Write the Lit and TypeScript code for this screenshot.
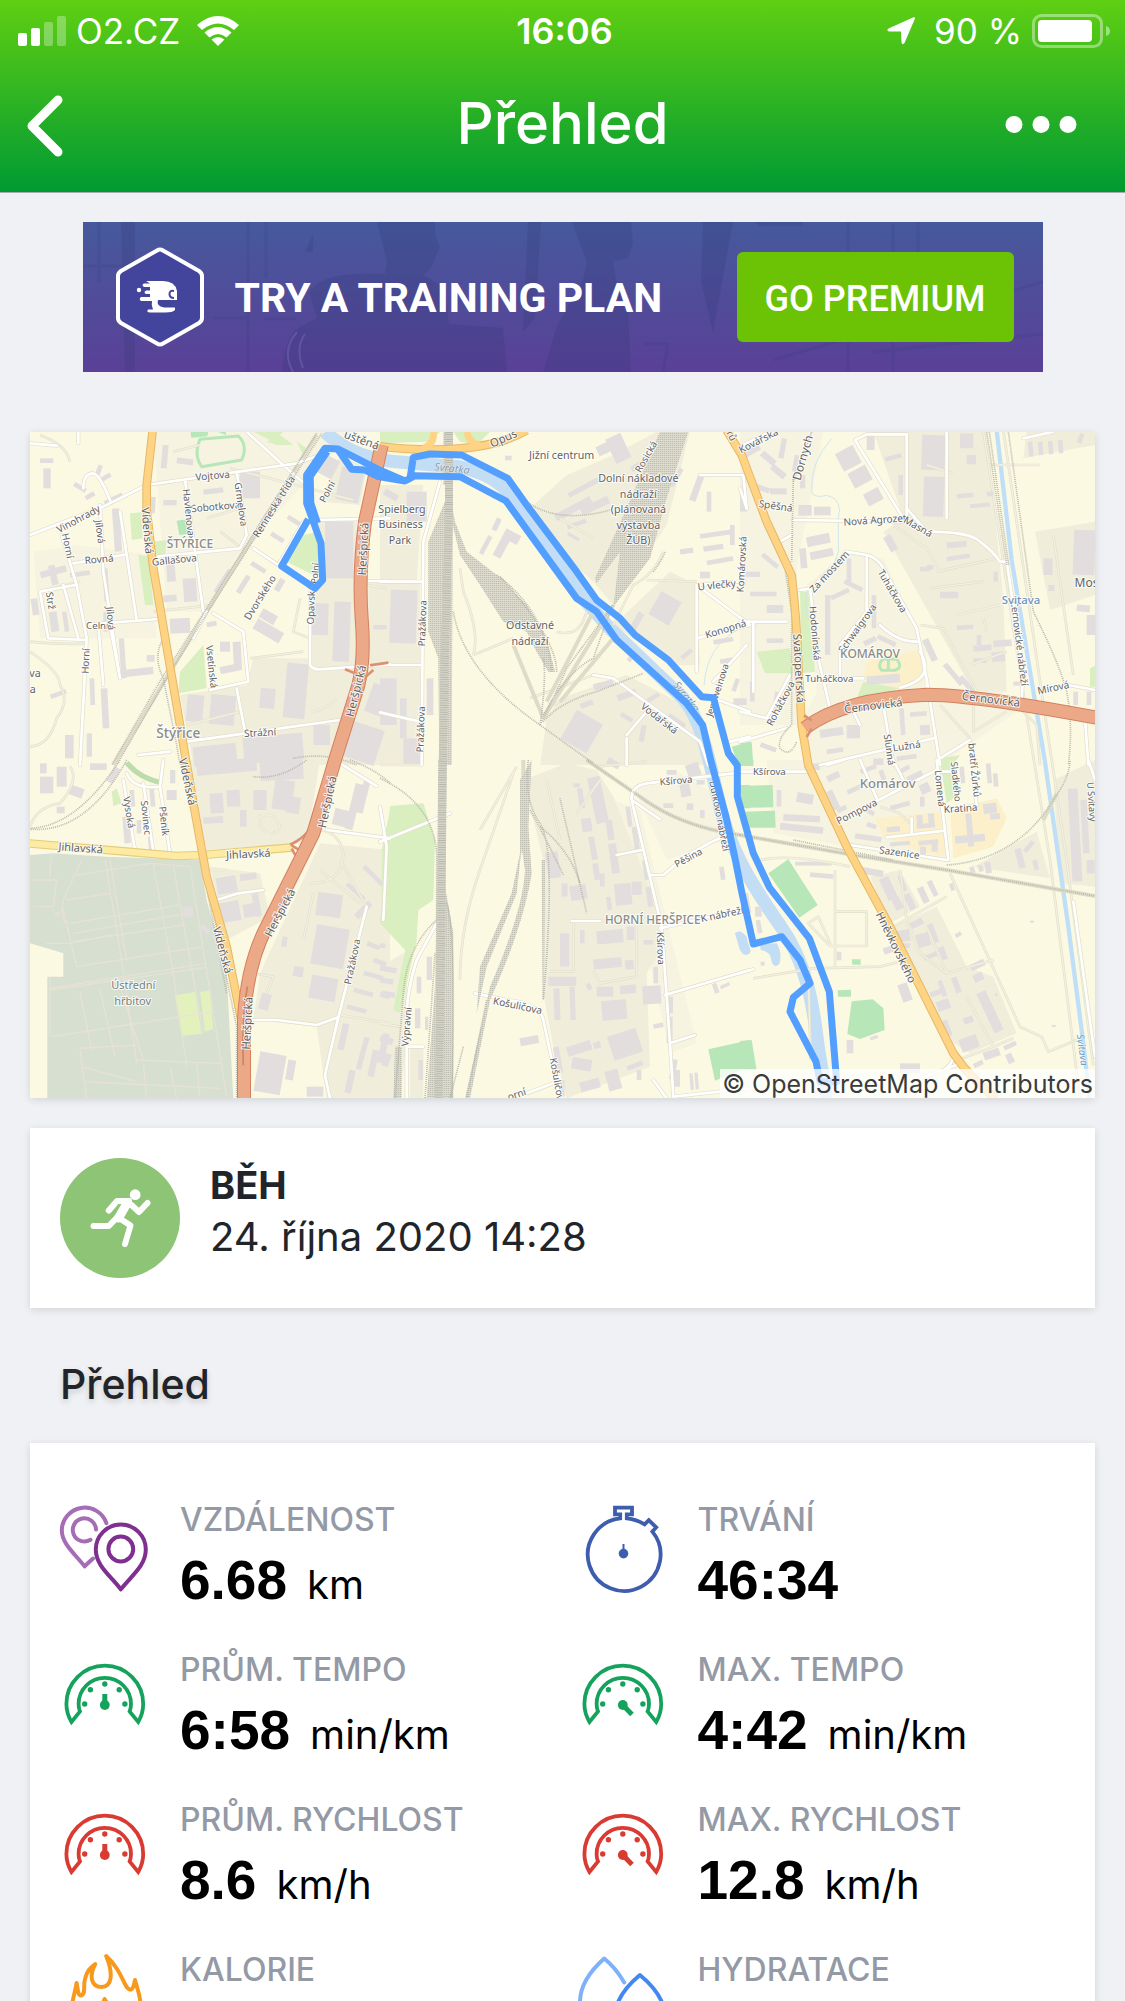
import { LitElement, html, svg, css } from "lit";
import { customElement, property } from "lit/decorators.js";

/* ---------- Map data: six tiles, each with its own local coordinates ---------- */

type Tile = "a" | "b" | "c" | "d" | "e" | "f";
type Layer = Partial<Record<Tile, string>>;

const ORIGIN: Record<Tile, [number, number]> = {
  a: [-30, -21], b: [1050, -21], c: [2130, -21],
  d: [-30, 984], e: [1050, 984], f: [2130, 984],
};

const residential: Layer = {
  a: "M400 20H1000L700 340 560 560 440 560ZM40 380L170 360 400 390 410 640H60Z",
  c: "M0 20H250L170 430V900H0ZM200 480L320 380 430 400 560 680 550 790 780 790 830 860 600 1020H200L180 900 230 800Z",
  e: "M700 120L780 150 860 480 950 850 870 880ZM760 80L900 40 1000 100 1040 240 860 300Z",
  f: "M80 0H600L620 300 330 260 100 220Z",
};

const industrial: Layer = {
  a: "M700 700L1110 700V1020H520L480 810 680 780ZM880 280H1010V730H870L880 470ZM1045 470H1110V720H1045ZM960 90L1040 130 1020 240 900 230Z",
  b: "M0 180H130L110 470H120V1020H0ZM450 250L560 150 700 90 830 20H930L860 300 700 540 640 470 560 400ZM700 600L870 440 950 480 960 720 880 720ZM540 820L740 750 930 850 975 1020H480L500 880Z",
  c: "M400 20H740L790 520 800 800 700 800 430 320 490 280ZM885 320L1065 290V510L930 555ZM860 20H1065V60L850 100Z",
  d: "M500 0H900L860 250 560 270ZM570 320L720 340 750 470 620 540ZM900 250L1110 270V1015H920L890 800 700 780 720 640Z",
  e: "M430 60L560 10 650 30 700 110 840 460 850 560 800 640 810 920 560 1015 520 860 490 700 490 300ZM0 620L70 580 90 760 60 1015H0ZM90 860H130V1015H90Z",
  f: "M460 500L590 440 680 620 760 650 830 820 690 880 640 850 560 700ZM700 320L890 215 930 355ZM940 60L1065 0V380L960 370ZM390 350L480 330 540 440 450 490Z",
};

const parks: Layer = {
  a: "M330 265L365 262 368 340 335 345ZM355 390L385 392 400 540 375 540ZM400 350L440 345 435 400 410 400ZM850 330L900 320 900 440 880 450 800 410ZM480 740L550 660 560 790 475 805ZM740 50L780 30 820 60 770 60ZM830 50L860 70 850 90ZM700 20H790L760 50Z",
  b: "M0 20H180L150 50 0 55ZM220 20H330L290 60 240 50Z",
  c: "M50 680L150 670 160 745 75 745ZM180 500L205 500 225 740 185 745ZM350 820L370 770 480 790 440 800ZM1050 730L1065 722V785H1050ZM600 1000L660 990 640 1020H600Z",
  d: "M275 95L290 85 305 130 280 138ZM1085 270L1110 150V510L1085 470Z",
  e: "M30 138L130 130 165 240 160 420 115 450 110 540 60 760 40 750 75 570 0 490Z",
  f: "M600 0H640L660 100 620 130Z",
};

const pitches: Layer = {
  a: "M470 287L500 283 504 328 478 330ZM512 20H565L562 34 514 38ZM592 20H618V30Z",
  b: "M1055 965L1110 950V1020H1075Z",
  c: "M0 955L35 950 40 1020H0Z",
  e: "M985 868L1110 840V920L1005 962ZM1080 75H1110V145H1085ZM1090 0H1110V15Z",
  f: "M0 78L98 75 100 142 18 143ZM15 155L105 152 107 203 25 203ZM85 340L145 298 233 435 178 473ZM335 598H362V614H337ZM293 691L333 689V710H294ZM335 724L398 718 430 745 434 810 360 837 322 822ZM0 843L35 840 50 930H0ZM0 0H40V18H0Z",
};

const school: Layer = {
  c: "M380 710L545 672 550 770 480 790 370 760Z",
  f: "M405 175L600 155 620 290 540 275 430 230ZM630 150L770 115 800 175 760 260 640 295Z",
};

const cemetery: Layer = {
  d: "M30 285L100 280 260 290 540 300 560 420 620 640 640 1015H82V650H130V580L30 550Z",
};

const water: Layer = {
  e: "M1065 520Q1080 505 1100 530L1110 580Q1090 595 1078 565Z",
  f: "M0 520Q25 535 32 575Q15 590 0 565ZM60 552L110 550Q128 580 118 612Q100 628 94 600Q92 575 62 570Z",
};

const streets: Layer = {
  a: "M30 330L250 245 380 180 830 115 900 90M190 190Q190 145 220 145 240 150 270 225M240 240L250 440 300 760M125 330L170 480 200 640 180 1020M60 500L165 480M60 500Q70 560 85 640L200 645M160 415L320 388M300 260L350 585M210 598L415 582M410 395L660 370M495 165L550 560M650 140L680 330 660 370M520 640L560 560M580 565L670 620 685 770 570 795M650 790L675 920M500 950L960 885M680 20L800 130 870 190M700 370L775 420M870 470V720Q880 735 900 733L1110 718M1040 468H1110M880 285L1110 280M775 420L850 290M355 990L450 980M270 600L300 760M235 600L250 780M130 480L175 640M175 20V55M30 55L110 62",
  b: "M130 350L125 1020M180 170L130 350M0 470H125M0 720H125M0 862L120 890M640 750L700 760 960 950 985 1020M950 740V480L1110 600M950 640L1110 600M960 150L1090 150 1100 250M1090 340V480M740 930L800 860M1000 820L1110 860M1050 950L1110 935M950 480L1080 470M740 940V1020M1100 660L1000 770",
  c: "M10 60L90 20M345 45L380 28H500V250L560 320Q690 320 720 350 760 380 780 410L800 410 850 740 845 820M345 45L490 280M160 285L500 290 500 250M620 20V280M180 495L215 490 320 380 380 390V560L300 660M380 390Q420 400 440 450L530 610 565 790M420 600Q470 650 530 650M205 760H370M300 660V750M540 680Q590 760 480 788M0 590H140M40 590V800M0 860L80 880 150 750M0 950L140 910M210 490L235 700 270 850M340 860L360 900M430 840L460 1020M570 830L600 1020M240 1020L580 940M600 1000L690 945M560 800V760M850 40L940 20M985 780L1065 795M1035 880L1045 1020M120 350L155 330M0 190L20 250",
  d: "M320 40Q340 90 420 80L430 0M310 60L345 270M370 70L400 275M420 80L450 280M960 10L1070 78M590 420L655 400 730 390M690 780H770L890 795 955 772M1040 440L955 772 915 945 930 1015M920 210L1110 235",
  e: "M0 245L210 160M1060 40L800 70Q750 80 755 120L845 500 870 850 880 1010M755 120L840 178M810 345H850Q930 270 1040 225M710 285L785 270M575 483H660M840 505L1080 450M855 705L1110 630M870 850L945 825M285 700L380 720Q480 730 490 780L540 1015M80 860H130M440 1000L520 970M820 960L860 1015M880 1010L1110 985M80 1015V860Q70 720 110 600L170 490M0 140L20 260 10 480",
  f: "M0 35H200M260 15L310 0M300 180L590 30M360 0L410 115M590 0L625 300M330 255L620 300M440 232L615 212M515 175V220M460 0L490 60M0 640L40 628M1000 425L1065 890M1045 0L1065 60M600 35H640M620 150L710 135 700 60M540 955L650 915M640 880Q640 920 600 935",
};

const lanes: Layer = {
  a: "M30 650Q130 660 200 655M30 680Q120 740 120 780 150 830 110 880 90 960 30 965M400 560L580 540M460 80L540 60M60 500L180 470M690 700L850 680M870 640L820 620 840 520M560 280L660 250M600 320L680 380M1040 480L1100 490M880 860Q920 850 950 820M630 130L1000 225M500 900L660 860M150 110Q140 60 60 30",
  b: "M450 820L640 750M240 430L250 500Q300 620 280 690M280 690L400 640M540 280L640 340M850 380Q820 450 760 480L700 600M800 465L950 470M530 620Q600 640 620 560M520 840L560 820",
  c: "M460 300L560 370 600 440M590 440L770 400M570 490L730 470M650 570L780 540M540 600L610 610 710 800M690 720L800 680M740 120H900M600 840L690 940M700 830V920L800 860M940 330L1000 750M740 620L730 580M560 120L640 145M840 850L890 900 900 1020",
  d: "M960 300L1040 440M900 330L1020 430M880 400L850 540M870 370Q970 370 970 280 960 220 900 210M720 170Q760 150 780 200 760 240 720 200ZM700 640L760 650 740 700M960 765L1110 790M560 330H620M30 200Q50 140 120 130 180 60 150 20",
  e: "M640 630L660 670 770 650V500M510 635H580V490M0 790L60 800M590 160L660 60M0 15H120M500 60L540 240M300 210L410 20M240 660Q240 500 300 330L400 40M650 20L800 5",
  f: "M60 300Q150 280 330 320M285 330V620M285 455H380V558H270L205 490 235 470 275 560M40 655L220 625 420 620 500 600M460 500L620 410M630 340L840 800 905 830 925 875 1010 840M680 710L760 860 640 905M500 480L540 580 620 640 760 600M480 330L500 480M420 140L480 160 510 190M760 860L820 835M205 640L212 900M560 500L620 640",
};

const rails: Layer = {
  a: "M905 25L570 550 440 760 290 1020M890 25L560 550 425 760 275 1020M425 650Q400 700 430 760L470 960 480 1020M820 1000Q920 980 1010 1020",
  b: "M383 160Q440 270 580 272 640 270 690 255M220 560Q250 740 480 900L640 1015M480 900Q500 760 490 700M480 900Q540 780 560 730L700 540M490 870Q560 740 640 700L690 560M490 890Q540 830 650 800L790 745M530 740Q530 640 360 455M350 450Q500 560 515 740M820 440Q850 400 855 380",
  c: "M160 150L155 410M135 430L155 560V900Q110 940 120 970 150 1000 170 950M740 20L800 420M748 20L806 420M805 20L880 560Q960 720 980 800 1000 900 985 1020M215 20L160 170",
  d: "M300 0Q170 200 30 205M320 0Q200 220 30 208M480 0L520 140 600 560 650 800V1015M490 0L550 330 620 700M700 50Q780 60 860 0M990 0Q1070 30 1110 70",
  e: "M0 55Q160 130 170 280V480Q80 560 70 700L45 1015M445 0Q430 120 480 190T490 720M450 150Q500 240 550 345M540 115L620 460M480 200Q570 270 600 370M620 0L780 110Q900 200 1080 225M250 860L210 1015M200 430Q230 520 215 1015M165 580L135 1015M320 720L260 1015",
  f: "M0 225L340 285 620 330 1065 408M620 315Q830 300 940 120 990 50 990 0M160 240L460 300",
};

const yards: Layer = {
  b: "M205 180L225 290 260 380 350 450 440 540 500 640 525 740 505 740 470 680 440 620 370 590 300 480 240 390 218 300 215 1020H178L175 700 145 620V350L195 230ZM840 20H925L860 220 810 400 700 545 720 380 650 475 645 460 740 250ZM190 20H218V180H190Z",
  e: "M175 0H200L195 380 220 520V1015H140L165 680 170 400ZM420 60L455 0 445 200 455 340Q430 500 330 720L270 1015H255L330 680Q430 450 435 330L425 260 410 400 320 620 290 760 300 620 395 400 420 280ZM485 300H495L492 720H488ZM45 860H65V1015H40Z",
};

const embankments: Layer = {
  b: "M400 660L490 880M700 540L490 880M640 560L500 830M700 640L540 830",
  e: "M620 0L780 110Q900 200 1080 225M430 0V280",
  f: "M0 225L340 285 620 330 1065 408M910 180L950 100",
  a: "M890 30L560 560 280 1020",
};

const graves: Layer = {
  d: "M170 345L390 310 510 320M255 300L305 600 350 910M270 300L320 600M140 420L270 400M400 315L460 640 500 920M460 320L550 820M510 320L590 820 620 1015M150 490L480 435M160 520L500 460M160 545L490 495M40 360L110 360 100 440 40 440M80 550H150L270 525M170 620L550 560M90 685L560 610M90 690L560 622M95 830L580 755M180 865L350 855M185 920L350 965M190 965L600 985M350 900L600 910M180 695L215 870M240 690L285 890M300 680L370 900M130 450L170 620M185 300L130 420Q120 480 140 490M90 650V830M180 870L200 1015M370 910L380 1015M450 920L470 1015M530 910L540 1015M95 280L90 350",
};

/* Building footprints: x y width height rotation */
const buildings: Layer = {
  a: "660 140 60 80 0;900 95 50 60 28;955 130 70 100 12;470 100 50 18 8;425 60 18 70 5;550 190 60 16 -6;380 215 26 50 4;430 225 40 16 0;60 430 80 20 -15;90 420 20 60 -12;250 430 16 100 -4;280 250 22 130 -4;300 640 16 120 -4;245 790 20 120 -3;210 760 14 80 -2;90 800 50 14 -20;135 930 26 70 0;200 925 16 70 0;500 810 50 80 5;570 810 75 90 5;720 790 45 60 5;795 715 65 165 5;915 290 85 170 0;875 535 50 95 2;940 530 50 180 2;700 600 90 35 30;720 560 50 30 30;640 470 60 16 -58;690 420 50 14 32;750 330 44 14 32;800 280 44 14 32;640 650 24 85 -3;600 650 30 30 0;600 720 60 22 -12;570 460 80 18 -57;450 580 60 45 -3;380 690 24 20 0;310 730 90 22 -6;60 100 40 14 0;70 130 22 60 0;160 180 40 14 30;240 150 34 14 -30;195 205 30 14 -30;230 120 14 30 20;250 215 60 12 -26;520 960 130 60 -6;670 930 180 80 -5;880 900 50 60 0;1060 600 40 14 0;1045 780 60 90 20;980 900 100 110 18;35 520 20 50 -8;90 560 24 60 -8;130 560 14 60 -8;440 415 26 55 -4;490 460 40 70 -4;150 440 60 14 -8;560 590 30 14 -10;430 510 40 20 -5;770 460 18 40 30;250 560 14 60 0",
  b: "30 495 80 160 2;10 200 45 20 30;80 200 60 90 0;0 760 50 140 0;60 820 20 120 0;140 760 20 110 0;70 940 60 80 0;690 30 50 80 -25;650 55 50 30 -25;375 92 20 14 0;330 290 40 16 -65;355 320 26 80 28;310 330 14 60 28;370 320 50 30 28;520 240 120 22 -28;560 180 100 16 -28;600 230 90 24 -25;750 110 60 18 -30;560 290 60 14 -20;860 150 60 14 -60;980 200 14 60 0;960 320 100 14 -8;970 360 60 16 -8;980 400 80 14 -10;960 440 30 20 0;820 510 70 80 30;760 560 20 60 30;700 620 16 40 -40;560 870 90 100 30;640 770 60 20 -15;710 800 60 20 -20;600 830 40 16 -20;800 810 40 14 -30;860 880 60 16 35;780 900 16 50 10;720 870 40 14 30;900 680 40 14 -40;1000 640 60 14 -10;1020 700 40 14 -10;1060 760 14 40 20;1080 200 20 60 0;1050 300 14 60 0;900 370 40 16 -8;670 560 16 40 20;560 330 40 10 30;740 690 30 14 -45;940 150 20 80 20;1060 820 40 20 0",
  c: "295 70 60 60 -28;330 130 60 50 -28;375 195 50 40 -28;545 30 70 105 2;550 155 62 120 2;380 30 24 45 0;435 90 50 14 -15;475 150 14 60 0;660 25 40 45 0;680 90 28 28 0;650 205 50 14 -6;690 235 60 12 -5;865 50 14 45 -5;895 50 14 40 -5;925 48 14 40 -5;955 45 14 40 -5;1015 25 14 30 20;175 240 40 32 0;222 245 50 26 0;200 330 70 30 -12;210 375 70 24 -12;180 370 20 60 -5;1000 315 65 135 2;910 400 28 50 0;925 480 18 18 0;1040 570 25 60 0;1010 540 40 20 5;0 60 60 30 -30;60 90 50 20 40;90 130 50 20 40;30 180 60 16 20;120 40 16 60 10;160 90 14 50 10;90 190 50 18 0;180 150 16 40 0;440 330 24 50 -30;320 400 14 80 0;255 510 16 180 0;270 500 60 14 -25;310 475 60 14 25;395 510 14 100 0;370 640 40 16 -25;410 640 60 14 25;560 640 20 70 -25;600 500 55 20 0;560 420 20 14 0;620 350 60 18 -5;620 390 70 14 -8;540 425 30 14 0;650 600 50 14 -4;710 630 14 30 0;760 645 55 20 -4;700 660 55 18 -4;755 680 40 30 -4;700 700 40 14 0;380 750 100 26 -5;600 740 80 16 50;650 770 60 16 50;0 440 60 16 0;30 500 80 14 0;60 400 60 14 40;80 540 50 24 0;80 640 50 14 0;30 770 14 60 0;100 800 14 60 10;60 960 50 14 20;240 910 70 24 -8;320 900 40 40 0;260 970 50 14 -8;480 850 14 80 -4;510 860 50 14 -4;540 900 30 30 -4;470 990 60 14 -8;400 1000 30 20 0;740 200 20 14 0;1000 800 14 40 0;1040 800 14 40 0;760 440 14 30 0;820 770 20 12 0",
  d: "60 50 40 50 0;110 20 30 60 0;150 80 40 30 20;60 10 20 30 0;110 140 24 20 0;270 20 20 50 30;210 10 50 20 0;330 90 14 50 -5;390 80 14 60 -5;310 170 20 80 -5;385 230 14 40 -5;440 90 30 30 0;350 180 14 40 0;450 30 16 40 0;530 0 180 40 -5;720 0 130 60 -3;570 100 40 60 -4;620 90 40 50 -4;660 150 20 50 0;550 170 60 20 -4;700 90 40 60 0;760 60 60 90 8;800 110 40 50 8;590 350 60 50 -10;660 340 50 20 -8;600 425 60 60 -10;670 430 50 40 -10;700 400 20 70 -10;990 70 24 140 14;940 150 60 50 14;1020 60 20 100 14;890 400 75 70 8;880 500 100 120 10;870 650 80 70 10;1000 360 14 70 -48;1020 340 80 14 45;785 530 16 30 10;820 620 30 30 10;1000 440 60 20 -45;1040 550 40 14 20;1060 600 40 14 20;1030 640 60 14 15;1000 690 60 14 15;980 740 60 14 15;1080 700 30 14 15;1020 830 16 100 15;960 790 20 80 12;1050 870 20 80 12;980 930 20 70 12;1080 820 20 90 12;710 880 80 120 10;800 900 24 60 10;860 980 50 30 0;720 700 30 50 15;490 440 30 30 0;105 455 14 14 0;540 500 30 14 40",
  e: "635 50 38 140 -12;595 85 16 60 -8;605 175 30 40 -8;630 230 18 70 -10;580 70 20 12 0;680 180 20 60 -8;690 250 24 90 -8;500 275 38 80 -8;545 370 18 40 0;570 375 50 45 -10;640 310 18 50 -8;660 340 14 40 0;705 370 50 65 -5;755 365 30 40 0;740 140 14 60 -8;760 200 16 80 -8;790 300 14 60 -8;800 380 16 60 -8;680 410 14 40 -8;540 520 28 100 0;600 510 14 40 0;650 510 80 40 -5;740 500 24 40 0;640 595 85 30 -5;735 600 26 28 -5;505 650 84 28 0;522 685 18 95 -2;570 680 16 100 -2;650 680 50 30 0;720 675 48 26 -5;665 720 75 60 -5;788 677 55 55 -3;820 620 14 50 0;790 540 30 14 0;560 850 75 30 -18;640 845 22 20 -15;690 815 90 75 -18;575 895 60 35 10;740 910 50 14 -20;600 960 60 30 -15;680 930 40 60 -15;525 860 18 80 -10;540 960 14 50 0;420 830 56 24 -10;865 710 14 50 0;860 770 18 80 0;850 920 60 16 -80;880 930 20 50 0;930 940 10 50 -5;945 938 10 50 -5;820 790 30 14 -10;900 60 30 50 -10;920 10 40 40 -20;950 60 24 14 0;920 130 20 20 0;960 150 14 24 0;1020 320 14 40 -8;850 130 30 14 0;860 30 30 14 0;0 620 50 16 10;0 655 40 16 10;5 695 40 16 10;0 550 16 14 0;0 830 40 20 20;10 880 20 40 20;140 590 16 70 0;110 650 14 50 0;105 745 16 60 0;135 770 10 40 0;115 900 14 60 0;190 750 16 50 0;770 930 14 30 0;620 670 14 20 -30;680 0 40 20 30;1000 670 14 30 -20;1020 672 30 10 -25",
  f: "130 165 110 20 3;120 195 130 20 6;170 100 50 30 10;110 90 14 50 0;210 10 30 20 0;270 90 20 60 -25;290 140 30 14 -25;320 80 50 14 -25;260 40 40 20 -25;290 190 20 50 -25;380 150 24 14 30;440 200 40 16 -5;420 30 14 30 -20;380 190 30 14 20;345 225 80 16 8;360 20 50 14 -20;500 40 50 20 -25;540 70 30 30 -25;450 130 60 14 -15;480 20 30 14 -30;530 165 18 40 -4;530 190 55 14 -4;565 160 18 40 -4;535 240 60 14 -6;540 260 18 25 0;575 240 18 35 0;450 245 60 12 -5;645 225 90 22 -5;680 160 18 100 -5;730 130 40 30 -8;750 160 30 18 -5;540 110 14 30 0;660 20 14 50 -5;740 10 14 60 -5;760 40 14 40 -5;690 320 14 20 -20;715 315 14 20 -20;735 305 18 35 -10;830 265 20 60 -15;880 300 14 30 -15;860 240 14 40 40;165 305 110 12 0;210 340 70 14 5;350 325 80 20 10;430 350 30 70 -25;460 410 24 40 -25;480 345 14 50 -20;540 380 20 50 -25;570 360 16 50 -25;500 400 20 50 -25;15 400 14 60 -10;45 440 20 30 0;50 480 14 40 -10;480 670 30 55 -20;430 560 30 20 -20;510 480 40 20 -25;470 510 40 35 -10;530 520 40 40 -15;570 490 18 60 -20;600 560 18 40 -20;550 580 50 14 -20;480 550 30 14 0;600 660 14 50 -20;570 690 40 16 -20;640 650 18 50 -20;590 720 40 30 -20;700 640 30 24 -25;690 605 45 20 -25;735 690 30 130 -25;670 770 30 20 -20;660 830 55 40 -20;610 780 20 50 -20;730 870 50 24 -20;790 850 40 14 -25;800 880 20 30 -25;700 905 30 14 -25;480 910 60 30 0;645 518 20 12 -30;390 828 24 10 -20;320 840 20 40 0;290 575 14 26 0;62 605 12 12 0;765 700 8 8 0;990 85 30 280 -3;1025 120 20 160 -3;1040 300 24 40 0;630 370 12 22 -20;870 482 12 6 0;935 795 12 6 0",
};

/* Labels: text | x | y | size | rotation | variant */
const labels: Layer = {
  a: "Vojtova|578|152|30|-5;Sobotkova|587|245|30|-5;Gallašova|463|405|30|-6;Rovná|237|403|30|-5;Vinohrady|175|282|30|-28;Havlenova|506|262|29|84;Grmelova|663|238|29|82;Jílová|240|320|29|82;Horní|143|362|29|78;Vídeňská|382|317|33|85;Renneská třída|762|245|30|-58;Polní|922|200|29|-62;Dvorského|720|517|30|-58;Opavská|873|540|29|-88;Polní|885|445|27|-85;Heršpická|1030|372|34|-87;Heršpická|1008|798|34|-76;Strž|92|527|29|82;Celní|232|603|29|0;Jílová|272|580|29|85;Horní|197|708|29|-88;Vsetínská|575|725|29|84;ŠTÝŘICE|510|357|36|0|place;Štýřice|475|924|41|0|place;Strážní|720|923|30|-3;va|45|745|32|0;a|38|792|32|0;uštěná|1025|45|34|20",
  b: "Svratka|216|130|32|6|river;Opuš|370|40|34|-24;Jižní centrum|545|90|32|0;Dolní nákladové|775|160|32|0;nádraží|775|207|32|0;(plánovaná|775|253|32|0;výstavba|775|300|32|0;ŽUB)|775|345|32|0;Rosická|798|95|29|-60;Spielberg|66|254|32|0;Business|62|298|32|0;Park|60|345|32|0;Odstavné|450|602|32|0;nádraží|450|648|32|0;Pražákova|127|595|29|-88;Pražákova|122|913|29|-88;Svratka|920|815|32|52|river;Vodařská|838|880|30|38;Konopná|1037|612|30|-17;U vlečky|1010|480|30|-6;Komárovská|1085|418|29|-87;Jeneweinova|1012|795|28|-72;rů|1055|32|30|60",
  c: "Kovářská|55|47|30|-27;Dornych|188|98|35|-74;Spěšná|107|243|30|8;Nová Agrozet|405|285|30|-4;Masná|534|305|30|30;Za mostem|268|440|30|-47;Tuháčkova|457|498|29|60;Hodonínská|225|625|29|85;Schwaigrova|352|610|29|-54;KOMÁROV|390|685|36|0|place;Tuháčkova|268|762|29|0;Svatopetrská|177|730|34|87;Roháčkova|122|835|29|-62;Černovická|400|842|34|-7;Černovická|753|823|34|7;Černovické nábřeží|838|655|29|83;Svitava|843|524|34|0|lake;Most|1046|472|36|0;Mírová|940|788|30|-12;Slunná|448|974|29|82;Lužná|500|963|30|-8",
  d: "Vídeňská|503|65|34|78;Vysoká|327|157|29|80;Sovinec|378|173|29|84;Pšeník|432|183|29|84;Jihlavská|182|264|33|4;Jihlavská|685|282|33|-3;Heršpická|922|126|34|-78;Heršpická|780|458|34|-62;Heršpická|682|790|34|-87;Vídeňská|608|570|34|75;Ústřední|340|675|33|0|soft;hřbitov|338|722|33|0|soft;Pražákova|997|605|29|-78",
  e: "Kšírova|888|62|29|-5;Dufkovo nábřeží|1018|168|28|79;Pěšina|925|293|29|-28;HORNÍ HERŠPICE|818|480|35|0|place;K nábřeží|1026|463|30|-12;Kšírova|842|565|29|88;Košuličova|413|737|30|12;Výpravní|80|800|29|-85;Košuličova|532|965|29|80;orní|410|1003|30|-20",
  f: "Kšírova|88|35|29|0;Komárov|443|70|39|0|place;Pompova|350|155|30|-27;Sazenice|478|278|30|8;Kratina|662|145|30|-4;Lomená|600|85|29|84;Sladkého|648|65|28|84;bratří Žůrků|703|30|29|84;Hněvkovského|468|562|34|64;Svitava|1027|870|30|82|river-deep;U Svitavy|1055|125|28|86",
};

const ROUTE_LOOP = "M835 262L755 402 855 469 878 444 873 334 850 269 830 214 830 129 885 49 925 51 1045 112 1125 147";
const ROUTE =
  "M925 54L965 112 1005 114 1045 134 1125 147 1140 139 1150 76 1200 66 1295 69 1433 139 1490 219 1640 419 1700 504 1770 559 1815 609 1915 684 2015 794 2050 797 2095 964 2122 1000 2122 1094 2170 1264 2218 1366 2338 1519 2398 1679 2420 1949 2370 1949 2358 1889 2280 1739 2290 1696 2340 1654 2310 1584 2255 1514 2170 1536 2136 1384 2112 1264 2088 1154 2042 984 2018 879 1970 814 1760 624 1700 539 1640 499 1428 207 1290 134 1155 131 1125 147";

const SVRATKA = "M885 0C950 60 1020 85 1130 92L1290 105Q1400 130 1440 190L1660 500 1740 590 1960 800C2010 860 2030 950 2060 1080C2090 1240 2160 1350 2250 1480C2330 1590 2350 1720 2365 1850L2390 1998";
const SVITAVA = "M2900 -5L2945 384 3045 990 3115 1484 3160 1834 3178 2000";
const VIDENSKA = "M368 -5L350 159 350 234 370 409 450 879 490 1114 530 1334 590 1544 635 1770";
const HERSPICKA = "M1055 39L1005 269Q985 420 995 560Q1005 680 985 760L915 984 850 1204 710 1484Q650 1600 642 1764V2000";
const CERNOVICKA = "M2325 888Q2440 800 2690 788Q2830 788 3200 857";
const OPUSTENA = "M1050 43C1200 60 1380 60 1490 -5";
const SVATOPETRSKA = "M2090 -5L2135 69 2210 269 2285 430Q2300 560 2305 700L2315 880 2335 1000 2450 1244 2580 1484 2770 1864Q2830 1950 2900 2000";
const JIHLAVSKA = "M-5 1234L290 1259 440 1272 520 1269 790 1246";
const MAIN_RAIL = "M1257 0V240L1246 600 1238 1000 1234 1500 1226 2000";

const TILES = Object.keys(ORIGIN) as Tile[];

const place = (t: Tile) => `translate(${ORIGIN[t][0]} ${ORIGIN[t][1]})`;

const layer = (data: Layer, cls: string) =>
  TILES.filter((t) => data[t]).map((t) => svg`<path class=${cls} transform=${place(t)} d=${data[t]}></path>`);

const footprints = () =>
  TILES.map(
    (t) => svg`<g transform=${place(t)}>${(buildings[t] ?? "").split(";").map((b) => {
      const [x, y, w, h, r] = b.split(" ").map(Number);
      return svg`<rect x=${x} y=${y} width=${w} height=${h} transform="rotate(${r} ${x + w / 2} ${y + h / 2})"></rect>`;
    })}</g>`
  );

const names = () =>
  TILES.map(
    (t) => svg`<g transform=${place(t)}>${(labels[t] ?? "").split(";").map((l) => {
      const [text, x, y, size, rot, kind] = l.split("|");
      return svg`<text class="name ${kind ?? ""}" font-size=${size} dy=".35em" transform="translate(${x} ${y}) rotate(${rot})">${text}</text>`;
    })}</g>`
  );

@customElement("route-map")
class RouteMap extends LitElement {
  static styles = css`
    :host { display: block; position: relative; box-shadow: 0 2px 8px rgba(0, 0, 0, 0.12); }
    .map { display: block; width: 100%; height: auto; }
    path { fill: none; stroke-linejoin: round; }
    .ground { fill: #fcf9e3; }
    .residential { fill: #f6f4e0; }
    .industrial { fill: #f0eedb; }
    .park { fill: #d9efc0; }
    .meadow { fill: #e3f1bd; }
    .pitch { fill: #b7e6b8; }
    .school { fill: #fcf0cb; }
    .cemetery { fill: #d7dfd1; }
    .water { fill: #c3ddf5; }
    .river-line { stroke: #c3ddf5; stroke-width: 40; }
    .stream { stroke: #bfdff8; stroke-width: 13; }
    .brook { stroke: #cfe6ee; stroke-width: 3; }
    .building { fill: #e3dede; }
    .grave { stroke: #e8e3d4; stroke-width: 4; stroke-dasharray: 5 1; }
    .lane-edge { stroke: #e2e0cd; stroke-width: 8; }
    .lane { stroke: #f3f0df; stroke-width: 4; }
    .street-edge { stroke: #e0decb; stroke-width: 12; stroke-linecap: round; }
    .street { stroke: #ffffff; stroke-width: 8; stroke-linecap: round; }
    .bank { stroke: #dedcc9; stroke-width: 12; }
    .yard { fill: #dddccf; }
    .yard-hatch { fill: url(#sleepers); }
    .rail { stroke: #b8b8ad; stroke-width: 5; stroke-dasharray: 3 3; }
    .main-rail { stroke: #d4d3c6; stroke-width: 24; }
    .main-rail-ties { stroke: #b0b0a6; stroke-width: 24; stroke-dasharray: 2 5; }
    .orange-edge { stroke: #e5b866; stroke-width: 26; }
    .orange { stroke: #fed384; stroke-width: 20; }
    .yellow-edge { stroke: #e4cd7c; stroke-width: 26; }
    .yellow { stroke: #fdeba3; stroke-width: 19; }
    .red-edge { stroke: #d3805f; stroke-width: 42; }
    .red { stroke: #eca988; stroke-width: 36; }
    .ramp { stroke: #dd9070; stroke-width: 8; }
    .track { stroke: #b7e6b8; stroke-width: 9; }
    .route { stroke: #529fff; stroke-width: 21; stroke-linecap: butt; }
    .route.double { stroke-width: 30; }
    .name {
      font-family: "Noto Sans", "Open Sans", sans-serif; text-anchor: middle; fill: #626262;
      stroke: rgba(255, 255, 255, 0.85); stroke-width: 6px; paint-order: stroke; stroke-linejoin: round;
    }
    .place { fill: #8b8b88; font-weight: 500; }
    .soft { fill: #77807a; }
    .river, .river-deep { fill: #8399ad; font-style: italic; stroke-width: 2px; }
    .river-deep { fill: #6d9cc8; }
    .lake { fill: #6c93bd; font-weight: 500; }
    .credit {
      position: absolute; right: 0; bottom: 0; padding: 1px 2px 0; color: #3b3b3b;
      background: rgba(255, 255, 255, 0.75); font: 25px/28px Inter, sans-serif;
    }
  `;

  render() {
    return html`
      <svg class="map" viewBox="0 0 3195 1998" role="img" aria-label="Mapa trasy">
        <defs>
          <pattern id="sleepers" width="6" height="6" patternUnits="userSpaceOnUse">
            <rect width="4" height="3" fill="#bdbdb2"></rect>
          </pattern>
        </defs>
        <rect class="ground" width="3195" height="1998"></rect>
        ${layer(residential, "residential")} ${layer(industrial, "industrial")}
        ${layer(school, "school")} ${layer(cemetery, "cemetery")} ${layer(parks, "park")}
        ${layer(pitches, "pitch")}
        <path class="meadow" d="M435 1690L495 1680 515 1805 455 1812ZM510 1680L540 1675 550 1790 525 1800Z"></path>
        <path d="M290 992Q330 1040 395 1052" stroke="#bcdcae" stroke-width="16"></path>
        <path class="track" d="M510 22Q490 70 515 104L635 84Q655 40 625 12Z"></path>
        <path class="track" d="M2560 680Q2540 700 2555 715H2595Q2620 705 2600 682ZM2575 680V715"></path>
        <path class="brook" d="M2405 20Q2340 90 2345 180 2350 200 2390 190 2440 200 2425 260V360Q2400 450 2330 480 2320 530 2340 560M2180 580L2130 590Q2030 640 2022 760"></path>
        <path class="river-line" d=${SVRATKA}></path>
        <path class="lane-edge" d="M2860 -5L2990 850 3060 1284 3150 2000M2920 -5L3045 850 3110 1284 3190 1900"></path>
        <path class="lane" d="M2860 -5L2990 850 3060 1284 3150 2000M2920 -5L3045 850 3110 1284 3190 1900"></path>
        <path class="stream" d=${SVITAVA}></path>
        ${layer(water, "water")} ${layer(graves, "grave")}
        <g class="building">${footprints()}</g>
        ${layer(lanes, "lane-edge")} ${layer(lanes, "lane")}
        ${layer(embankments, "bank")}
        ${layer(streets, "street-edge")} ${layer(streets, "street")}
        ${layer(yards, "yard")} ${layer(yards, "yard-hatch")} ${layer(rails, "rail")}
        <path class="main-rail" d=${MAIN_RAIL}></path>
        <path class="main-rail-ties" d=${MAIN_RAIL}></path>
        <path class="yellow-edge" d=${JIHLAVSKA}></path>
        <path class="yellow" d=${JIHLAVSKA}></path>
        <path class="ramp" d="M780 1238Q820 1220 840 1190M785 1250L805 1285 825 1240M785 1240L825 1265"></path>
        <path class="orange-edge" d=${OPUSTENA + VIDENSKA + SVATOPETRSKA}></path>
        <path class="orange" d=${OPUSTENA + VIDENSKA + SVATOPETRSKA}></path>
        <path class="orange" d="M1210 0Q1215 35 1180 48M1310 0Q1320 35 1350 40"></path>
        <path class="red-edge" d=${HERSPICKA + CERNOVICKA}></path>
        <path class="red" d=${HERSPICKA + CERNOVICKA}></path>
        <path class="ramp" d="M945 712L990 730M1075 692L1020 700M1030 714L1000 740M2322 850L2345 865M2330 915L2345 890"></path>
        <path d="M652 1664Q635 1760 640 1900" stroke="#c98467" stroke-width="5"></path>
        ${names()}
        <path class="route double" d="M888 56L836 132 838 214 858 275"></path>
        <path class="route" d=${ROUTE_LOOP}></path>
        <path class="route" d=${ROUTE}></path>
      </svg>
      <span class="credit">© OpenStreetMap Contributors</span>
    `;
  }
}

/* ---------- Metric icons ---------- */

const GAUGE = "M11.5 72C8 66 6.4 60 6.4 54A38.4 38.4 0 0 1 83.2 54C83.2 60 81.6 66 78.2 72L69.6 61.5Q71 58 71 54A26.2 26.2 0 0 0 18.6 54Q18.6 58 20 61.5Z";

const gauge = (needle: string) => svg`
  <path d=${GAUGE} fill="none" stroke="currentColor" stroke-width="3.8"></path>
  <g fill="currentColor">
    <circle cx="24.7" cy="54" r="2.7"></circle><circle cx="30.4" cy="39.7" r="2.7"></circle>
    <circle cx="44.8" cy="34" r="2.7"></circle><circle cx="59.2" cy="39.7" r="2.7"></circle>
    <circle cx="64.9" cy="54" r="2.7"></circle><circle cx="44.8" cy="55" r="4.9"></circle>
  </g>
  <path d=${needle} stroke="currentColor" stroke-width="5"></path>`;

const AVERAGE = "M44.8 55V44";
const MAXIMUM = "M44.8 55L54 64.5";

const ICONS: Record<string, unknown> = {
  pins: svg`
    <g fill="none" stroke-width="4" stroke-linecap="round" stroke-linejoin="round">
      <g stroke="#a56db5">
        <path d="M46.4 23.2A22.9 22.9 0 0 0 1.8 30.5C2 44 15 54 24.6 66.3L33 58.5"></path>
        <path d="M36 29.5A11.6 11.6 0 1 0 30.5 39.8"></path>
      </g>
      <g stroke="#7f2f90">
        <path d="M60.8 89.4C51 76 35.8 66 35.8 49.6A25 25 0 0 1 85.8 49.6C85.8 66 71 76 60.8 89.4Z"></path>
        <circle cx="60.8" cy="49" r="12.4"></circle>
      </g>
    </g>`,
  stopwatch: svg`
    <path d="M42.2 18.4V14.4H37V7.7H54V14.4H48.8V18.4Q58.6 19.4 66.6 24.4L70.8 20.2 78.2 27.4 74.4 31.6A36.4 36.4 0 1 1 42.2 18.4Z"
      fill="none" stroke="#3f5daf" stroke-width="3.8"></path>
    <circle cx="45.5" cy="53.6" r="4.8" fill="#3f5daf"></circle>
    <path d="M45.5 54V44" stroke="#3f5daf" stroke-width="2"></path>`,
  gaugeAverage: gauge(AVERAGE),
  gaugeMaximum: gauge(MAXIMUM),
  flame: svg`
    <g fill="none" stroke="#f7991c" stroke-width="4" stroke-linejoin="round">
      <path d="M12 62C11 52 15 44 16.6 33C18 40 18 45.5 21 45.5C26 44.5 23 36 25 29C27 21 30 18 35.2 14C29 26 31 37 41.6 37C52 37 53.5 24 46.2 6C56 15 60 24 65 34C67 38 68.4 40 71 39.6C74 38 74 34 75 30C77 38 80.5 45 80.5 55C80 78 65 90 46 90C27 90 13 79 12 62Z"></path>
      <path d="M34 72C34 62 42 58 44.5 49C50 58 58 62 58 72"></path>
    </g>`,
  drops: svg`
    <g fill="none" stroke-width="4" stroke-linecap="round" stroke-linejoin="round">
      <path stroke="#7fb1fb" d="M46.2 32.5Q38 18 26.2 8.5Q2 30 2 52Q3 66 16 74"></path>
      <path stroke="#4388f0" d="M61.9 25Q39 44 37 64Q38 84 62 86Q86 84 87 64Q85 44 61.9 25Z"></path>
    </g>`,
};

@customElement("metric-item")
class MetricItem extends LitElement {
  @property() icon = "pins";
  @property() label = "";
  @property() value = "";
  @property() unit = "";
  @property() tone = "";

  static styles = css`
    :host { display: flex; gap: 32px; min-height: 150px; font-family: Inter, sans-serif; }
    .icon { flex: none; width: 88px; height: 100px; overflow: visible; }
    .green { color: #14a25c; }
    .red { color: #d93a31; }
    .label { color: #9499a6; font-size: 32px; font-weight: 500; line-height: 40px; }
    .reading { display: flex; align-items: baseline; gap: 20px; color: #000; line-height: 80px; white-space: nowrap; }
    .value { font-family: "Liberation Sans", sans-serif; font-size: 55px; font-weight: 700; }
    .unit { font-size: 40px; }
  `;

  render() {
    return html`
      <svg class="icon ${this.tone}" viewBox="0 0 88 100" aria-hidden="true">${ICONS[this.icon]}</svg>
      <div>
        <div class="label">${this.label}</div>
        ${this.value
          ? html`<div class="reading"><span class="value">${this.value}</span>${this.unit ? html`<span class="unit">${this.unit}</span>` : ""}</div>`
          : ""}
      </div>
    `;
  }
}

const METRICS = [
  { icon: "pins", label: "VZDÁLENOST", value: "6.68", unit: "km" },
  { icon: "stopwatch", label: "TRVÁNÍ", value: "46:34" },
  { icon: "gaugeAverage", tone: "green", label: "PRŮM. TEMPO", value: "6:58", unit: "min/km" },
  { icon: "gaugeMaximum", tone: "green", label: "MAX. TEMPO", value: "4:42", unit: "min/km" },
  { icon: "gaugeAverage", tone: "red", label: "PRŮM. RYCHLOST", value: "8.6", unit: "km/h" },
  { icon: "gaugeMaximum", tone: "red", label: "MAX. RYCHLOST", value: "12.8", unit: "km/h" },
  { icon: "flame", label: "KALORIE" },
  { icon: "drops", label: "HYDRATACE" },
];

/* ---------- Screen ---------- */

@customElement("app-root")
class AppRoot extends LitElement {
  static styles = css`
    :host { display: block; font-family: Inter, "Liberation Sans", sans-serif; color: #212529; }
    .screen { display: flex; flex-direction: column; height: 100vh; background: #f0f1f4; }
    .top { flex: none; color: #fff; background: linear-gradient(#5fcf12, #009a33); border-bottom: 1px solid #a9aaa9; }
    .status { display: grid; grid-template-columns: 1fr auto 1fr; align-items: center; height: 62px; padding: 0 14px 0 18px; font-size: 35px; }
    .side { display: flex; align-items: center; gap: 10px; white-space: nowrap; }
    .side.end { justify-content: flex-end; }
    .wifi { margin-left: 6px; }
    .arrow { margin-right: 8px; }
    .clock { font-size: 36px; font-weight: 600; }
    .nav { display: grid; grid-template-columns: 1fr auto 1fr; align-items: center; height: 130px; padding: 0 24px; }
    .title { margin: 0; font-size: 58px; font-weight: 500; line-height: 70px; padding-bottom: 8px; }
    .bare { display: flex; padding: 0; border: 0; background: none; color: inherit; }
    .bare.more { justify-self: end; padding-right: 24px; }
    .main { flex: 1; min-height: 0; overflow-y: auto; scrollbar-width: none; padding: 29px 30px 0; }
    .banner {
      position: relative; display: flex; align-items: center; max-width: 960px; height: 150px; margin: 0 auto 60px;
      padding: 0 29px 0 32px; box-sizing: border-box; background: linear-gradient(#46599c, #5a4097);
      font-family: Roboto, sans-serif; color: #fff;
    }
    .scene { position: absolute; inset: 0; width: 100%; height: 100%; }
    .hex { position: relative; flex: none; }
    .pitch { position: relative; flex: 1; margin-left: 30px; padding-top: 2px; font-size: 41px; font-weight: 700; white-space: nowrap; }
    .premium {
      position: relative; width: 277px; height: 90px; padding: 4px 0 0; border: 0; border-radius: 6px; background: #6cc305;
      color: #fff; font: 500 36px Roboto, sans-serif; white-space: nowrap;
    }
    .card { background: #fff; box-shadow: 0 2px 8px rgba(0, 0, 0, 0.12); }
    .activity { display: flex; align-items: center; gap: 30px; margin-top: 30px; padding: 30px; }
    .badge { flex: none; display: block; border-radius: 50%; background: #8dc475; }
    .kind { font-size: 38px; font-weight: 700; line-height: 52px; }
    .date { font-size: 40px; line-height: 52px; }
    .words { padding-bottom: 14px; }
    .heading { margin: 0; padding: 51px 30px 34px; font-size: 41px; font-weight: 500; line-height: 50px; text-shadow: 0 3px 6px rgba(0, 0, 0, 0.16); }
    .metrics { display: grid; grid-template-columns: 1fr 1fr; padding: 57px 0 0 30px; }
  `;

  render() {
    return html`
      <div class="screen">
        <header class="top">
          <div class="status">
            <div class="side">
              <svg width="48" height="30" viewBox="0 0 48 30" fill="#fff" aria-hidden="true">
                <rect y="17" width="9" height="13" rx="2"></rect>
                <rect x="13" y="12" width="9" height="18" rx="2"></rect>
                <g opacity=".3"><rect x="26" y="6" width="9" height="24" rx="2"></rect><rect x="39" width="9" height="30" rx="2"></rect></g>
              </svg>
              <span>O2.CZ</span>
              <svg class="wifi" width="44" height="30" viewBox="0 0 44 30" fill="#fff" aria-hidden="true">
                <path d="M1 9Q22 -9 43 9L38 14Q22 1 6 14Z"></path>
                <path d="M8.5 16.5Q22 5.5 35.5 16.5L30.5 21.5Q22 14.5 13.5 21.5Z"></path>
                <path d="M15.5 23.5Q22 18.5 28.5 23.5L22 30Z"></path>
              </svg>
            </div>
            <span class="clock">16:06</span>
            <div class="side end">
              <svg class="arrow" width="30" height="28" viewBox="0 0 30 28" aria-hidden="true">
                <path d="M29 1.5L18.500 26Q16.500 28.500 15.500 25.500L15 14.500 3 14.500Q0 13.500 2.500 11.500L27 0.500Q29.500 -0.300 29 1.500Z" fill="#fff"></path>
              </svg>
              <span>90 %</span>
              <svg width="79" height="34" viewBox="0 0 79 34" aria-hidden="true">
                <rect x="1.5" y="1.5" width="68" height="31" rx="8" fill="none" stroke="#fff" stroke-opacity=".4" stroke-width="3"></rect>
                <rect x="6" y="6" width="54" height="22" rx="4" fill="#fff"></rect>
                <path d="M74 12Q78 13 78 17T74 22Z" fill="#fff" fill-opacity=".45"></path>
              </svg>
            </div>
          </div>
          <div class="nav">
            <button class="bare" aria-label="Zpět">
              <svg width="44" height="66" viewBox="0 0 44 66" fill="none" stroke="#fff" stroke-width="9" stroke-linecap="round" stroke-linejoin="round">
                <path d="M34 6L8 32 34 58"></path>
              </svg>
            </button>
            <h1 class="title">Přehled</h1>
            <button class="bare more" aria-label="Další">
              <svg width="72" height="22" viewBox="0 0 72 22" fill="#fff">
                <circle cx="9" cy="8.5" r="8.5"></circle><circle cx="36" cy="8.5" r="8.5"></circle><circle cx="63" cy="8.5" r="8.5"></circle>
              </svg>
            </button>
          </div>
        </header>
        <main class="main">
          <section class="banner">
            <svg class="scene" viewBox="0 0 960 150" preserveAspectRatio="none" aria-hidden="true">
              <g fill="#2b3670" opacity=".2">
                <path d="M294 0H352V12L357 26 352 36Q350 46 340 53L362 66 366 102 420 106 424 150H200Q198 128 212 108L234 96 226 70Q240 48 302 52L304 40Z"></path>
                <path d="M489 0H548L550 22 545 36 530 39 534 62 545 90 548 150H460L474 104 500 58 504 40Z"></path>
                <path d="M38 0H52V150H42ZM445 0H458L452 96 440 110ZM222 30L230 12V30ZM620 0L650 0 630 110 618 60ZM672 0H720V4H676Z"></path>
              </g>
              <path d="M210 150Q198 128 214 110M220 146Q212 126 222 112" stroke="#7d74b8" stroke-width="2" fill="none" opacity=".4"></path>
              <path d="M0 44H40M165 0V96H130M165 96V150M183 0V56M180 97H214M765 0V150M835 0V44M810 2V150M16 0V60M690 138L960 60M790 130L960 112M560 122H585L580 150" stroke="#2b3670" stroke-width="3" fill="none" opacity=".14"></path>
            </svg>
            <svg class="hex" width="90" height="100" viewBox="0 0 90 100" aria-hidden="true">
              <path d="M42 3.5Q45 1.5 48 3.5L84 24Q87 26 87 29V71Q87 74 84 76L48 96.5Q45 98.5 42 96.5L6 76Q3 74 3 71V29Q3 26 6 24Z" fill="#42459b" stroke="#fff" stroke-width="4"></path>
              <path d="M31 34H48Q60 34 62 44V53H43Q41 59 49 60.5H60V63Q58 65.5 50 65.5H35Q31 65.5 33 62.5H38Q36 58 37 54H26Q23.5 52 26 50H35V47H31Q28 45.5 31 43.5H35V40H29Q26 38 29 36.5H35Z" fill="#fff"></path>
              <circle cx="24" cy="43" r="2.2" fill="#fff"></circle>
              <path d="M59 44Q54.5 43 54.5 47T59 51" fill="none" stroke="#42459b" stroke-width="2"></path>
            </svg>
            <span class="pitch">TRY A TRAINING PLAN</span>
            <button class="premium">GO PREMIUM</button>
          </section>
          <route-map></route-map>
          <section class="card activity">
            <svg class="badge" width="120" height="120" viewBox="0 0 120 120" fill="none" stroke="#fff" stroke-width="6" stroke-linecap="round" stroke-linejoin="round" aria-hidden="true">
              <circle cx="75.2" cy="36.7" r="5.4" fill="#fff" stroke="none"></circle>
              <path d="M69 43H57L48.8 52.5M71.5 47L79 54 87.5 45"></path>
              <path d="M67.5 44.5L58.5 60" stroke-width="9"></path>
              <path d="M57 59.5L48.8 68H33.5M59 60L70.5 67.5 65 86"></path>
            </svg>
            <div class="words">
              <div class="kind">BĚH</div>
              <div class="date">24. října 2020 14:28</div>
            </div>
          </section>
          <h2 class="heading">Přehled</h2>
          <section class="card metrics">
            ${METRICS.map(
              (m) => html`<metric-item .icon=${m.icon} .label=${m.label} .value=${m.value ?? ""} .unit=${m.unit ?? ""} .tone=${m.tone ?? ""}></metric-item>`
            )}
          </section>
        </main>
      </div>
    `;
  }
}
